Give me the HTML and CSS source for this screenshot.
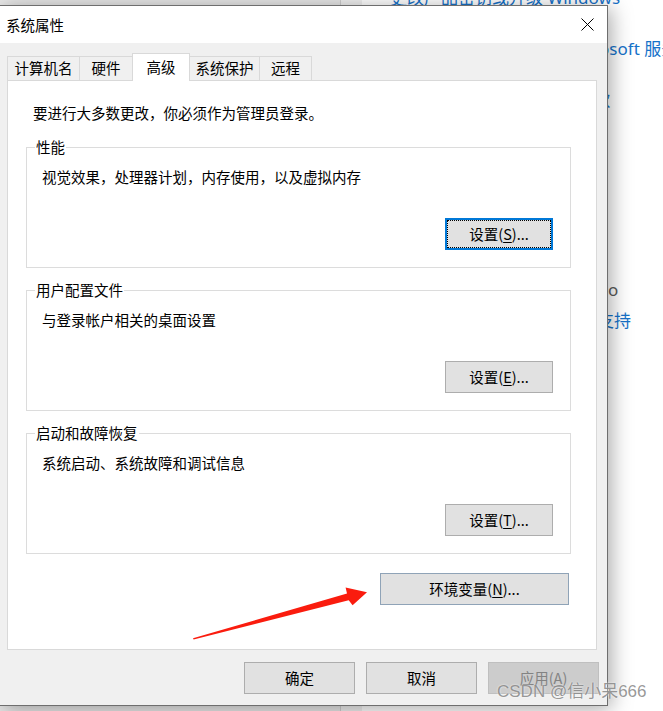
FILE: index.html
```html
<!DOCTYPE html>
<html lang="zh-CN">
<head>
<meta charset="utf-8">
<title>系统属性</title>
<link rel="stylesheet" href="styles.css">
</head>
<body>
<div class="desktop">
  <div class="bg-window">
    <div class="bg-sidebar"></div>
    <div class="bg-gutter"></div>
    <div class="bg-main">
      <div class="bg-links">
        <span class="bg-link">更改产品密钥或升级 Windows</span>
        <span class="bg-link">阅读适用于我们服务的 Microsoft 服务协议</span>
        <span class="bg-link">阅读 Microsoft 软件许可条款</span>
        <span class="bg-gray">o</span>
        <span class="bg-link bg-support">支持</span>
      </div>
    </div>
  </div>

  <div class="dialog">
    <div class="titlebar">
      <span class="title">系统属性</span>
      <svg class="close" viewBox="0 0 13 13" width="13" height="13"><path d="M0.5 0.5 L12.5 12.5 M12.5 0.5 L0.5 12.5" stroke="#000" stroke-width="1" fill="none"/></svg>
    </div>
    <div class="dialog-body">
      <div class="tabs">
        <div class="tab tab-1">计算机名</div>
        <div class="tab tab-2">硬件</div>
        <div class="tab tab-active">高级</div>
        <div class="tab tab-4">系统保护</div>
        <div class="tab tab-5">远程</div>
      </div>
      <div class="panel">
        <p class="intro">要进行大多数更改，你必须作为管理员登录。</p>
        <div class="group group-first">
          <span class="group-title">性能</span>
          <p class="group-desc">视觉效果，处理器计划，内存使用，以及虚拟内存</p>
          <button class="btn btn-set btn-focus">设置(<u>S</u>)...</button>
        </div>
        <div class="group">
          <span class="group-title">用户配置文件</span>
          <p class="group-desc">与登录帐户相关的桌面设置</p>
          <button class="btn btn-set">设置(<u>E</u>)...</button>
        </div>
        <div class="group">
          <span class="group-title">启动和故障恢复</span>
          <p class="group-desc">系统启动、系统故障和调试信息</p>
          <button class="btn btn-set">设置(<u>T</u>)...</button>
        </div>
        <button class="btn btn-env">环境变量(<u>N</u>)...</button>
      </div>
      <div class="footer">
        <button class="btn btn-foot">确定</button>
        <button class="btn btn-foot">取消</button>
        <button class="btn btn-foot btn-disabled">应用(<u>A</u>)</button>
      </div>
    </div>
  </div>

  <svg class="arrow" width="663" height="711" viewBox="0 0 663 711">
    <polygon points="193,638.2 347,593.6 345.6,587.6 367,592.2 352.6,605.2 348.7,600.2 193.6,639.6" fill="#fa1c0e"/>
  </svg>

  <div class="watermark">CSDN @信小呆666</div>
</div>
</body>
</html>
```

FILE: styles.css
```css
* { box-sizing: border-box; }
html, body { margin: 0; padding: 0; }
body {
  width: 663px;
  height: 711px;
  overflow: hidden;
  background: #fff;
  font-family: "Noto Sans CJK SC", "Microsoft YaHei", sans-serif;
  color: #000;
}
.desktop {
  position: relative;
  width: 663px;
  height: 711px;
  overflow: hidden;
  background: #fff;
}

/* background settings window */
.bg-window {
  position: absolute;
  inset: 0;
  display: flex;
}
.bg-sidebar {
  flex: none;
  width: 340px;
  background: #e8e8e8;
}
.bg-gutter {
  flex: none;
  width: 22px;
  background: #f0f0f0;
  border-left: 1px solid #cfcfcf;
}
.bg-main {
  flex: 1;
  min-width: 0;
  padding-left: 28px;
  background: #fff;
}
.bg-links {
  margin-top: -14px;
  display: flex;
  flex-direction: column;
  align-items: flex-start;
}
.bg-link {
  font-family: "Noto Sans", "Noto Sans CJK SC", sans-serif;
  font-size: 17px;
  line-height: 24px;
  color: #1672c9;
  white-space: nowrap;
  margin-bottom: 27px;
}
.bg-gray {
  margin-top: 139px;
  margin-left: 218px;
  font-family: "Noto Sans", sans-serif;
  font-size: 17px;
  line-height: 24px;
  color: #5a5a5a;
}
.bg-support {
  margin-top: 7px;
  margin-left: 207px;
}

/* dialog */
.dialog {
  position: absolute;
  left: 0;
  top: 5px;
  width: 608px;
  height: 701px;
  border: 1px solid #6e6e6e;
  border-left: none;
  background: #f0f0f0;
  box-shadow: 3px 3px 20px rgba(0, 0, 0, 0.35);
  display: flex;
  flex-direction: column;
}
.titlebar {
  flex: none;
  height: 37px;
  background: #fff;
  display: flex;
  align-items: center;
  justify-content: space-between;
  padding: 0 13px 0 6px;
  font-size: 14.5px;
  line-height: 20px;
}
.close { display: block; }

.dialog-body {
  flex: 1;
  padding: 10px 10px 0 7px;
  display: flex;
  flex-direction: column;
}
.tabs {
  position: relative;
  z-index: 1;
  display: flex;
  align-items: flex-end;
  height: 27px;
}
.tab {
  height: 24px;
  border: 1px solid #d9d9d9;
  border-bottom: none;
  border-right: none;
  background: #f0f0f0;
  font-size: 14.5px;
  line-height: 22px;
  text-align: center;
  white-space: nowrap;
}
.tab-1 { width: 72px; }
.tab-2 { width: 53px; }
.tab-active {
  width: 58px;
  height: 28px;
  margin-bottom: -1px;
  background: #fff;
  border-right: 1px solid #d9d9d9;
  line-height: 26px;
}
.tab-4 { width: 69px; border-left: none; }
.tab-5 { width: 53px; border-right: 1px solid #d9d9d9; }

.panel {
  flex: none;
  height: 570px;
  border: 1px solid #d9d9d9;
  background: #fff;
  padding: 22px 25px 0 18px;
  display: flex;
  flex-direction: column;
}
.intro {
  margin: 0;
  padding-left: 7px;
  font-size: 14.5px;
  line-height: 20px;
}
.group {
  position: relative;
  height: 121px;
  margin-top: 22px;
  border: 1px solid #dcdcdc;
  padding: 19px 17px 17px 15px;
  display: flex;
  flex-direction: column;
  justify-content: space-between;
  align-items: flex-start;
}
.group-first { margin-top: 24px; }
.group-title {
  position: absolute;
  top: -11px;
  left: 8px;
  padding: 0 1px;
  background: #fff;
  font-size: 14.5px;
  line-height: 20px;
}
.group-desc {
  margin: 0;
  font-size: 14.5px;
  line-height: 20px;
}

.btn {
  height: 32px;
  padding: 0;
  border: 1px solid #adadad;
  background: #e1e1e1;
  font-family: "Noto Sans CJK SC", "Microsoft YaHei", sans-serif;
  font-size: 14.5px;
  line-height: 20px;
  color: #000;
  display: flex;
  align-items: center;
  justify-content: center;
  white-space: nowrap;
}
.btn u { text-underline-offset: 2px; }
.btn-set {
  width: 108px;
  align-self: flex-end;
}
.btn-focus {
  position: relative;
  border: 2px solid #0078d7;
}
.btn-focus::after {
  content: "";
  position: absolute;
  inset: 0;
  border: 1px dotted #000;
}
.btn-env {
  width: 189px;
  margin-top: 19px;
  margin-right: 2px;
  align-self: flex-end;
  border-color: #8fa3b7;
}
.footer {
  display: flex;
  justify-content: flex-end;
  gap: 11px;
  margin-top: 12px;
  margin-right: -2px;
}
.btn-foot { width: 111px; }
.btn-disabled {
  background: #cccccc;
  border-color: #bfbfbf;
  color: #838383;
}

.arrow {
  position: absolute;
  left: 0;
  top: 0;
  pointer-events: none;
}
.watermark {
  position: absolute;
  left: 497px;
  top: 681px;
  font-family: "Liberation Sans", "Noto Sans CJK SC", sans-serif;
  font-size: 17px;
  line-height: 22px;
  color: rgba(125, 125, 125, 0.8);
  text-shadow: 0 0 2px rgba(255, 255, 255, 0.9);
  white-space: nowrap;
}
```
